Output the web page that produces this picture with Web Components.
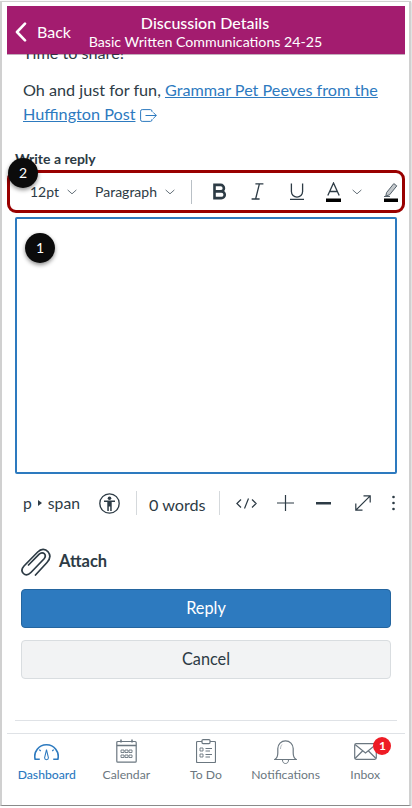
<!DOCTYPE html>
<html lang="en">
<head>
<meta charset="utf-8">
<title>Discussion Details</title>
<style>
html, body { margin: 0; padding: 0; background: #fff; }
body { font-family: Lato, "Liberation Sans", sans-serif; color: #2d3b45; }
</style>
</head>
<body>
<phone-frame>
    <app-header title="Discussion Details" subtitle="Basic Written Communications 24-25"></app-header>
    <discussion-text>
        <p>Time to share!</p>
        <p>Oh and just for fun, <a>Grammar Pet Peeves from the Huffington Post</a> <svg width="17" height="13" viewBox="0 0 17 13" fill="none" stroke="#2d7abf" stroke-width="1" style="vertical-align:-2px"><path d="M12 3V2.200A1.600 1.600 0 0 0 10.400.6H2.200A1.600 1.600 0 0 0 .6 2.200v8.600a1.600 1.600 0 0 0 1.600 1.600h8.200a1.600 1.600 0 0 0 1.600-1.600V10M5.500 6.500h10.800M13.200 3.400l3.100 3.100-3.100 3.100"/></svg></p>
    </discussion-text>
    <reply-form></reply-form>
    <tab-bar></tab-bar>
</phone-frame>

<script>
/* || Outer frame of the screenshot */
class PhoneFrame extends HTMLElement {
    constructor() {
        super();
        this.attachShadow({ mode: "open" }).innerHTML = `
            <style>
            :host {
                display: block;
                box-sizing: border-box;
                width: 411px;
                height: 805px;
                margin-top: 1px;
                border: 1px solid #d0d0d0;
                border-left-width: 2px;
                border-right-width: 2px;
                border-bottom-color: #8a8a8a;
                box-shadow: 0 1px 2px rgba(0,0,0,0.35);
                padding: 4px 4px 0 5px;
                position: relative;
                overflow: hidden;
            }
            .col { display: flex; flex-direction: column; height: 100%; }
            </style>
            <div class="col"><slot></slot></div>
            <call-out style="left: 6px; top: 156px">2</call-out>
            <call-out style="left: 23px; top: 231px">1</call-out>
        `;
    }
}
customElements.define("phone-frame", PhoneFrame);

/* || Numbered marker on top of the page */
class CallOut extends HTMLElement {
    constructor() {
        super();
        this.attachShadow({ mode: "open" }).innerHTML = `
            <style>
            :host {
                position: absolute;
                width: 30px;
                height: 30px;
                border-radius: 50%;
                background: #0b0b0b;
                color: #fff;
                font: 14px/30px Lato, sans-serif;
                text-align: center;
                box-shadow: 0 2px 4px rgba(0,0,0,0.45);
            }
            </style>
            <slot></slot>
        `;
    }
}
customElements.define("call-out", CallOut);

/* || Magenta title bar */
class AppHeader extends HTMLElement {
    constructor() {
        super();
        this.attachShadow({ mode: "open" }).innerHTML = `
            <style>
            :host {
                display: block;
                flex: none;
                height: 48px;
                background: #a31c6f;
                color: #fff;
                position: relative;
                z-index: 1;
                box-shadow: 0 1px 0 rgba(80,20,60,0.35);
            }
            .bar { display: grid; grid-template-columns: 1fr; height: 100%; justify-items: center; align-content: start; padding-top: 7px; box-sizing: border-box; }
            .title { font-size: 16px; line-height: 20px; font-weight: 500; margin-right: 2px; }
            .sub { font-size: 14.2px; line-height: 18px; margin-right: 1px; }
            .back { position: absolute; left: 8px; top: 16px; display: flex; align-items: center; gap: 10px; font-size: 16px; line-height: 20px; }
            </style>
            <div class="bar">
                <div class="title"></div>
                <div class="sub"></div>
            </div>
            <div class="back">
                <svg width="12" height="20" viewBox="0 0 12 20" fill="none" stroke="#fff" stroke-width="2.6" stroke-linecap="round" stroke-linejoin="round"><path d="M10 1.600 2 10l8 8.400"/></svg>
                <span>Back</span>
            </div>
        `;
    }
    connectedCallback() {
        this.shadowRoot.querySelector(".title").textContent = this.getAttribute("title");
        this.shadowRoot.querySelector(".sub").textContent = this.getAttribute("subtitle");
        this.removeAttribute("title");
    }
}
customElements.define("app-header", AppHeader);

/* || Message text, scrolled so the first line sits under the header */
class DiscussionText extends HTMLElement {
    constructor() {
        super();
        this.attachShadow({ mode: "open" }).innerHTML = `
            <style>
            :host {
                display: block;
                flex: none;
                height: 97px;
                overflow: hidden;
                padding: 0 16px;
                font-size: 16.2px;
                line-height: 24px;
                color: #2d3b45;
            }
            ::slotted(p) { margin: 0 0 13px; }
            ::slotted(p:first-child) { margin-top: -13px; }
            </style>
            <slot></slot>
        `;
    }
    connectedCallback() {
        this.querySelectorAll("a").forEach(a => {
            a.style.color = "#2d7abf";
            a.style.textDecoration = "underline";
        });
    }
}
customElements.define("discussion-text", DiscussionText);

/* || Rich text toolbar, with the red highlight around it */
const rteToolbarTemplate = document.createElement("template");
rteToolbarTemplate.innerHTML = `
    <style>
    :host {
        display: flex;
        align-items: center;
        box-sizing: border-box;
        height: 43px;
        width: 398px;
        border: 3px solid #990000;
        border-radius: 9px;
        padding: 0 0 0 20px;
        font-size: 14px;
        color: #2d3b45;
    }
    .drop { display: flex; align-items: center; gap: 8px; }
    .sep { width: 1px; height: 24px; background: #b9c0c6; margin: 0 21px 0 16px; }
    .tools { display: flex; align-items: center; }
    svg { display: block; flex: none; }
    </style>
    <div class="drop" style="margin-right: 18px"><span>12pt</span>
        <svg width="10" height="6" viewBox="0 0 11 6" fill="none" stroke="#56626c"><path d="M.7.7 5.500 5 10.300.7"/></svg></div>
    <div class="drop"><span>Paragraph</span>
        <svg width="10" height="6" viewBox="0 0 11 6" fill="none" stroke="#56626c"><path d="M.7.7 5.500 5 10.300.7"/></svg></div>
    <div class="sep"></div>
    <div class="tools">
        <svg width="14" height="17" viewBox="0 0 15 17" fill="none" stroke="#2d3b45" stroke-width="2.800"><path d="M1.600 1.400h6.600a3.400 3.400 0 0 1 0 7H1.600zM1.600 8.400h7.400a3.600 3.600 0 0 1 0 7.200H1.600z"/></svg>
        <svg style="margin-left: 24px" width="13" height="17" viewBox="0 0 13 17" fill="none" stroke="#2d3b45" stroke-width="1.300"><path d="M4.400.8h8M.6 16h8M8.400.8 4.600 16"/></svg>
        <svg style="margin-left: 26px" width="14" height="17" viewBox="0 0 14 17" fill="none" stroke="#2d3b45" stroke-width="1.300"><path d="M1.400.5v8a5.600 5.600 0 0 0 11.200 0v-8M0 16.300h14"/></svg>
        <svg style="margin-left: 22px" width="15" height="20" viewBox="0 0 15 20" fill="none"><path d="M1.800 13.500 7.500 1l5.700 12.500M3.500 9.500h8" stroke="#2d3b45" stroke-width="1.300"/><rect y="16.500" width="15" height="3.500" fill="#000"/></svg>
        <svg style="margin-left: 11px" width="10" height="6" viewBox="0 0 11 6" fill="none" stroke="#56626c"><path d="M.7.7 5.500 5 10.300.7"/></svg>
        <svg style="margin-left: 22px" width="14" height="20" viewBox="0 0 14 20" fill="none"><path d="M2.600 10.500 9.800 1.600l3 2.300-7.200 8.900-3.800 1.200z" fill="#c3c8cc" stroke="#56626c" stroke-width="1"/><path d="M0 14.500h6" stroke="#56626c"/><rect y="16.500" width="14" height="3.500" fill="#000"/></svg>
    </div>
`;
class RteToolbar extends HTMLElement {
    constructor() {
        super();
        this.attachShadow({ mode: "open" }).appendChild(rteToolbarTemplate.content.cloneNode(true));
    }
}
customElements.define("rte-toolbar", RteToolbar);

/* || Row under the editor: path, word count, view buttons */
const rteStatusTemplate = document.createElement("template");
rteStatusTemplate.innerHTML = `
    <style>
    :host {
        display: flex;
        align-items: center;
        height: 26px;
        margin-top: 16px;
        padding-left: 8px;
        font-size: 15.700px;
        color: #2d3b45;
    }
    .sep { width: 1px; height: 24px; background: #d5d9dc; flex: none; }
    svg { display: block; flex: none; }
    .words { width: 57px; margin: 2px 13px 0 12px; font-size: 16.200px; white-space: nowrap; }
    .path { display: flex; align-items: center; gap: 6px; width: 58px; }
    .path i { width: 0; height: 0; border-left: 4px solid #2d3b45; border-top: 3px solid transparent; border-bottom: 3px solid transparent; }
    </style>
    <div class="path"><span>p</span><i></i><span>span</span></div>
    <svg style="margin: 0 16px 0 18px" width="21" height="21" viewBox="0 0 21 21" fill="none"><circle cx="10.500" cy="10.500" r="9.700" stroke="#2d3b45" stroke-width="1.300"/><circle cx="10.500" cy="5.200" r="1.800" fill="#2d3b45"/><path d="M5 7.500h11v1.500h-3.300v9h-1.500v-4.500h-1.400V18H8.300V9H5z" fill="#2d3b45"/></svg>
    <div class="sep"></div>
    <span class="words">0 words</span>
    <div class="sep"></div>
    <svg style="margin-left: 16px" width="21" height="11" viewBox="0 0 21 11" fill="none" stroke="#2d3b45" stroke-width="1.200"><path d="M5 1.500.9 5.500 5 9.500M16 1.500l4.100 4-4.100 4M12.500.5l-4 10"/></svg>
    <svg style="margin-left: 20px" width="17" height="16" viewBox="0 0 17 16" fill="none" stroke="#2d3b45" stroke-width="1.200"><path d="M8.500 0v16M0 8h17"/></svg>
    <svg style="margin-left: 22px" width="15" height="3" viewBox="0 0 15 3"><rect width="15" height="2.500" fill="#2d3b45"/></svg>
    <svg style="margin-left: 24px" width="16" height="16" viewBox="0 0 16 16" fill="none" stroke="#2d3b45" stroke-width="1.200"><path d="M.8 15.200 15.200.8M8.500.8h6.700v6.700M.8 8.500v6.700h6.700"/></svg>
    <svg style="margin-left: 21px" width="3" height="16" viewBox="0 0 3 16" fill="#2d3b45"><circle cx="1.500" cy="2" r="1.300"/><circle cx="1.500" cy="8" r="1.300"/><circle cx="1.500" cy="14" r="1.300"/></svg>
`;
class RteStatus extends HTMLElement {
    constructor() {
        super();
        this.attachShadow({ mode: "open" }).appendChild(rteStatusTemplate.content.cloneNode(true));
    }
}
customElements.define("rte-status", RteStatus);

/* || Reply form */
const replyFormTemplate = document.createElement("template");
replyFormTemplate.innerHTML = `
    <style>
    :host { display: block; flex: none; padding: 0 0 0 8px; }
    label { display: block; font-size: 14px; font-weight: 700; line-height: 17px; margin: -1px 0 3px 0; }
    rte-toolbar { margin-left: -8px; }
    .editor { box-sizing: border-box; width: 382px; height: 257px; margin-top: 4px; border: 2px solid #2d7abf; border-radius: 2px; }
    .attach { display: flex; align-items: center; gap: 7px; margin: 29px 0 0 5px; font-size: 16.500px; font-weight: 700; height: 32px; }
    .btn { box-sizing: border-box; display: block; width: 370px; margin-left: 6px; height: 39px; border-radius: 4px; text-align: center; font-size: 16.300px; line-height: 36px; }
    .reply { background: #2d7abf; border: 1px solid #24659f; color: #fff; margin-top: 12px; }
    .cancel { background: #f2f3f4; border: 1px solid #d9dde0; color: #2d3b45; margin-top: 12px; }
    hr { border: 0; border-top: 1px solid #dfe2e6; width: 382px; margin: 41px 0 0; }
    svg { display: block; }
    </style>
    <label>Write a reply</label>
    <rte-toolbar></rte-toolbar>
    <div class="editor"></div>
    <rte-status></rte-status>
    <div class="attach">
        <svg width="32" height="32" viewBox="0 0 32 32" fill="none" stroke="#2d3b45" stroke-width="1.700" stroke-linecap="round"><path d="M15.500 30 27 17.500c3-3.300 3.800-7.500 1-10.800-2.800-3.200-7-3-10.300.3L4 21c-2.300 2.500-2.600 5.500-.6 7.500s5 1.500 7.500-1l13-13.500c1.500-1.700 1.800-3.700.5-5.200s-3.500-1.300-5.200.3L8.500 20"/></svg>
        <span>Attach</span>
    </div>
    <div class="btn reply">Reply</div>
    <div class="btn cancel">Cancel</div>
    <hr>
`;
class ReplyForm extends HTMLElement {
    constructor() {
        super();
        this.attachShadow({ mode: "open" }).appendChild(replyFormTemplate.content.cloneNode(true));
    }
}
customElements.define("reply-form", ReplyForm);

/* || One item of the bottom navigation */
class TabItem extends HTMLElement {
    constructor() {
        super();
        this.attachShadow({ mode: "open" }).innerHTML = `
            <style>
            :host {
                display: flex;
                flex-direction: column;
                align-items: center;
                position: relative;
                flex: 1 1 0;
                font-size: 12.200px;
                line-height: 16px;
                color: #6b7780;
            }
            :host([active]) { color: #2d7abf; font-weight: 500; }
            .icon { height: 25px; display: flex; align-items: flex-end; justify-content: center; margin-bottom: 3px; }
            </style>
            <div class="icon"><slot name="icon"></slot></div>
            <slot></slot>
        `;
    }
}
customElements.define("tab-item", TabItem);

/* || Bottom navigation */
const tabBarTemplate = document.createElement("template");
tabBarTemplate.innerHTML = `
    <style>
    :host {
        display: flex;
        flex: none;
        margin-top: 12px;
        border-top: 1px solid #dfe2e6;
        padding-top: 5px;
    }
    .badge {
        position: absolute;
        left: 48px;
        top: -2px;
        width: 18px;
        height: 18px;
        border-radius: 50%;
        background: #ee1c25;
        color: #fff;
        font-size: 12px;
        line-height: 18px;
        text-align: center;
        font-weight: 700;
    }
    svg { display: block; }
    </style>
    <tab-item active>
        <svg slot="icon" style="margin-bottom:3px" width="25" height="18" viewBox="0 0 26 18" fill="none" stroke="#2d7abf" stroke-width="1.700"><path d="M6 16.500H1.200A12 12 0 0 1 13 1.500a12 12 0 0 1 11.800 15H20"/><path d="M13 6.500 15 15a2 2 0 0 1-4 0z" stroke-width="1.100"/><path d="M5.500 6.500l1.500 1.500M20.500 6.500 19 8" stroke-width="1.300"/></svg>
        Dashboard
    </tab-item>
    <tab-item>
        <svg slot="icon" style="margin-bottom:1px" width="21" height="24" viewBox="0 0 21 24" fill="none" stroke="#6b7780" stroke-width="1.200"><rect x=".8" y="2.500" width="19.400" height="20.700" rx="1"/><path d="M.8 6.500h19.400M5 .5v3M16 .5v3" stroke-width="1.500"/><path d="M5 11h3v2.500H5zM9 11h3v2.500H9zM13 11h3v2.500h-3zM5 16h3v2.500H5zM9 16h3v2.500H9zM13 16h3v2.500h-3z" stroke-width=".9"/></svg>
        Calendar
    </tab-item>
    <tab-item>
        <svg slot="icon" style="margin-bottom:1px" width="20" height="24" viewBox="0 0 20 24" fill="none" stroke="#6b7780" stroke-width="1.200"><path d="M6 2.500H1.500a1 1 0 0 0-1 1v19a1 1 0 0 0 1 1h17a1 1 0 0 0 1-1v-19a1 1 0 0 0-1-1H14"/><rect x="6" y=".6" width="8" height="4" rx="1"/><path d="M4 9h3v3H4zM4 15h3v3H4z" stroke-width=".9"/><path d="M9.500 9.500h6.500M9.500 12h4.500M9.500 15.500h6.500M9.500 18h4.500" stroke-width="1"/></svg>
        To Do
    </tab-item>
    <tab-item>
        <svg slot="icon" width="23" height="25" viewBox="0 0 23 25" fill="none" stroke="#6b7780" stroke-width="1.200"><path d="M.8 20.500c2.500-1.500 3-3.500 3-6.500V9.500a7.700 7.700 0 0 1 15.400 0V14c0 3 .5 5 3 6.500z"/><path d="M8.500 21c0 2.500 1.500 3.500 3 3.500s3-1 3-3.500" stroke-width="1"/><path d="M8 5.500C6.800 7 6.500 8.500 6.500 10" stroke-width=".9" stroke="#a9b1b7"/></svg>
        Notifications
    </tab-item>
    <tab-item>
        <svg slot="icon" width="23" height="17" viewBox="0 0 23 17" fill="none" stroke="#6b7780" stroke-width="1.200" style="margin-bottom:4px"><rect x=".7" y=".7" width="21.600" height="15.600" rx="1.500"/><path d="m1 1.500 10.500 8.500L22 1.500M1 15.500l7.500-7.500M22 15.500 14.500 8"/></svg>
        Inbox
        <span class="badge">1</span>
    </tab-item>
`;
class TabBar extends HTMLElement {
    constructor() {
        super();
        this.attachShadow({ mode: "open" }).appendChild(tabBarTemplate.content.cloneNode(true));
    }
}
customElements.define("tab-bar", TabBar);
</script>
</body>
</html>
